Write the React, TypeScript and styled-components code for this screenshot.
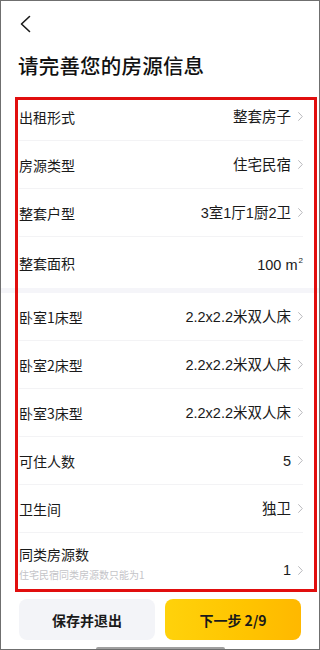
import styled, { createGlobalStyle } from "styled-components";

const GlobalStyle = createGlobalStyle`
  html, body {
    margin: 0;
    padding: 0;
    background: #fff;
  }
  * {
    box-sizing: border-box;
  }
`;

const Screen = styled.div`
  position: relative;
  width: 320px;
  height: 650px;
  border: 1px solid #6f6f6f;
  background: #fff;
  display: flex;
  flex-direction: column;
  overflow: hidden;
  font-family: "Liberation Sans", "Noto Sans CJK SC", sans-serif;
  color: #1a1a1a;
`;

const TopBar = styled.div`
  height: 44px;
  padding: 14px 0 0 18px;
`;

const BackBtn = styled.svg`
  width: 14px;
  height: 18px;
  display: block;
`;

const Title = styled.h1`
  margin: 6px 0 0 17px;
  font-family: "Noto Sans CJK SC", sans-serif;
  font-size: 20.5px;
  font-weight: 500;
  line-height: 28px;
  color: #111;
  letter-spacing: 0.2px;
`;

const List = styled.div`
  flex: 1;
  overflow: hidden;
  margin-top: 14px;
`;

const Group = styled.div`
  padding: 0 16px 0 18px;
`;

const Band = styled.div`
  height: 5px;
  background: #f5f5f9;
`;

const Row = styled.div<{ $h?: number; $last?: boolean }>`
  height: ${(p) => p.$h ?? 48}px;
  display: flex;
  align-items: center;
  justify-content: space-between;
  border-bottom: ${(p) => (p.$last ? "none" : "1px solid #f3f3f5")};
`;

const LabelBox = styled.div`
  display: flex;
  flex-direction: column;
`;

const Label = styled.span`
  font-family: "Noto Sans CJK SC", sans-serif;
  font-size: 14px;
  line-height: 20px;
  color: #1a1a1a;
`;

const Hint = styled.span`
  font-family: "Noto Sans CJK SC", sans-serif;
  font-size: 10px;
  line-height: 14px;
  color: #c4c4c8;
  margin-top: 4px;
`;

const ValueBox = styled.div<{ $offset?: number }>`
  display: flex;
  align-items: center;
  gap: 7px;
  margin-top: ${(p) => p.$offset ?? 0}px;
`;

const Value = styled.span`
  font-family: "Liberation Sans", "Noto Sans CJK SC", sans-serif;
  font-size: 14.5px;
  line-height: 20px;
  color: #1a1a1a;
  sup {
    font-size: 8px;
    vertical-align: 7px;
    margin-left: 1px;
  }
`;

const Chevron = styled.svg`
  width: 5px;
  height: 9px;
  flex: none;
`;

const Footer = styled.div`
  height: 58px;
  padding: 8px 18px 0 18px;
  display: grid;
  grid-template-columns: 1fr 1fr;
  gap: 10px;
  align-items: start;
`;

const Button = styled.button<{ $primary?: boolean }>`
  height: 41px;
  border: none;
  border-radius: 8px;
  font-family: "Noto Sans CJK SC", sans-serif;
  font-size: 14px;
  font-weight: 700;
  color: #1a1a1a;
  background: ${(p) =>
    p.$primary ? "linear-gradient(90deg, #ffd20b 0%, #ffc400 60%, #ffb800 100%)" : "#f3f4f8"};
`;

const HomeBar = styled.div`
  position: absolute;
  left: 95px;
  bottom: -2px;
  width: 129px;
  height: 4px;
  border-radius: 2px;
  background: #a0a0a0;
`;

const Highlight = styled.div`
  position: absolute;
  left: 14px;
  top: 96px;
  width: 302px;
  height: 495px;
  border: 3px solid #e10e0e;
  pointer-events: none;
`;

type Item = { label: string; value: React.ReactNode; h?: number; last?: boolean };

const groupA: Item[] = [
  { label: "出租形式", value: "整套房子" },
  { label: "房源类型", value: "住宅民宿" },
  { label: "整套户型", value: "3室1厅1厨2卫" },
  {
    label: "整套面积",
    value: (
      <>
        100 m<sup>2</sup>
      </>
    ),
    h: 51,
    last: true,
  },
];

const groupB: Item[] = [
  { label: "卧室1床型", value: "2.2x2.2米双人床" },
  { label: "卧室2床型", value: "2.2x2.2米双人床" },
  { label: "卧室3床型", value: "2.2x2.2米双人床" },
  { label: "可住人数", value: "5" },
  { label: "卫生间", value: "独卫" },
];

function Arrow() {
  return (
    <Chevron viewBox="0 0 5 9" fill="none">
      <path d="M0.6 0.6 L4.3 4.5 L0.6 8.4" stroke="#b8b8bc" strokeWidth={1} strokeLinecap="round" strokeLinejoin="round" />
    </Chevron>
  );
}

function InfoRow({ item, chevron = true }: { item: Item; chevron?: boolean }) {
  return (
    <Row $h={item.h} $last={item.last}>
      <Label>{item.label}</Label>
      <ValueBox>
        <Value>{item.value}</Value>
        {chevron && <Arrow />}
      </ValueBox>
    </Row>
  );
}

export default function App() {
  return (
    <>
      <GlobalStyle />
      <Screen>
        <TopBar>
          <BackBtn viewBox="0 0 14 18" fill="none">
            <path d="M10.5 1.5 L2.5 9 L10.5 16.5" stroke="#1a1a1a" strokeWidth={1.6} strokeLinecap="round" strokeLinejoin="round" />
          </BackBtn>
        </TopBar>
        <Title>请完善您的房源信息</Title>
        <List>
          <Group>
            {groupA.map((it) => (
              <InfoRow key={it.label} item={it} chevron={it.label !== "整套面积"} />
            ))}
          </Group>
          <Band />
          <Group>
            {groupB.map((it) => (
              <InfoRow key={it.label} item={it} />
            ))}
            <Row $h={60} $last>
              <LabelBox>
                <Label>同类房源数</Label>
                <Hint>住宅民宿同类房源数只能为1</Hint>
              </LabelBox>
              <ValueBox $offset={14}>
                <Value>1</Value>
                <Arrow />
              </ValueBox>
            </Row>
          </Group>
        </List>
        <Footer>
          <Button>保存并退出</Button>
          <Button $primary>下一步 2/9</Button>
        </Footer>
        <Highlight />
        <HomeBar />
      </Screen>
    </>
  );
}
